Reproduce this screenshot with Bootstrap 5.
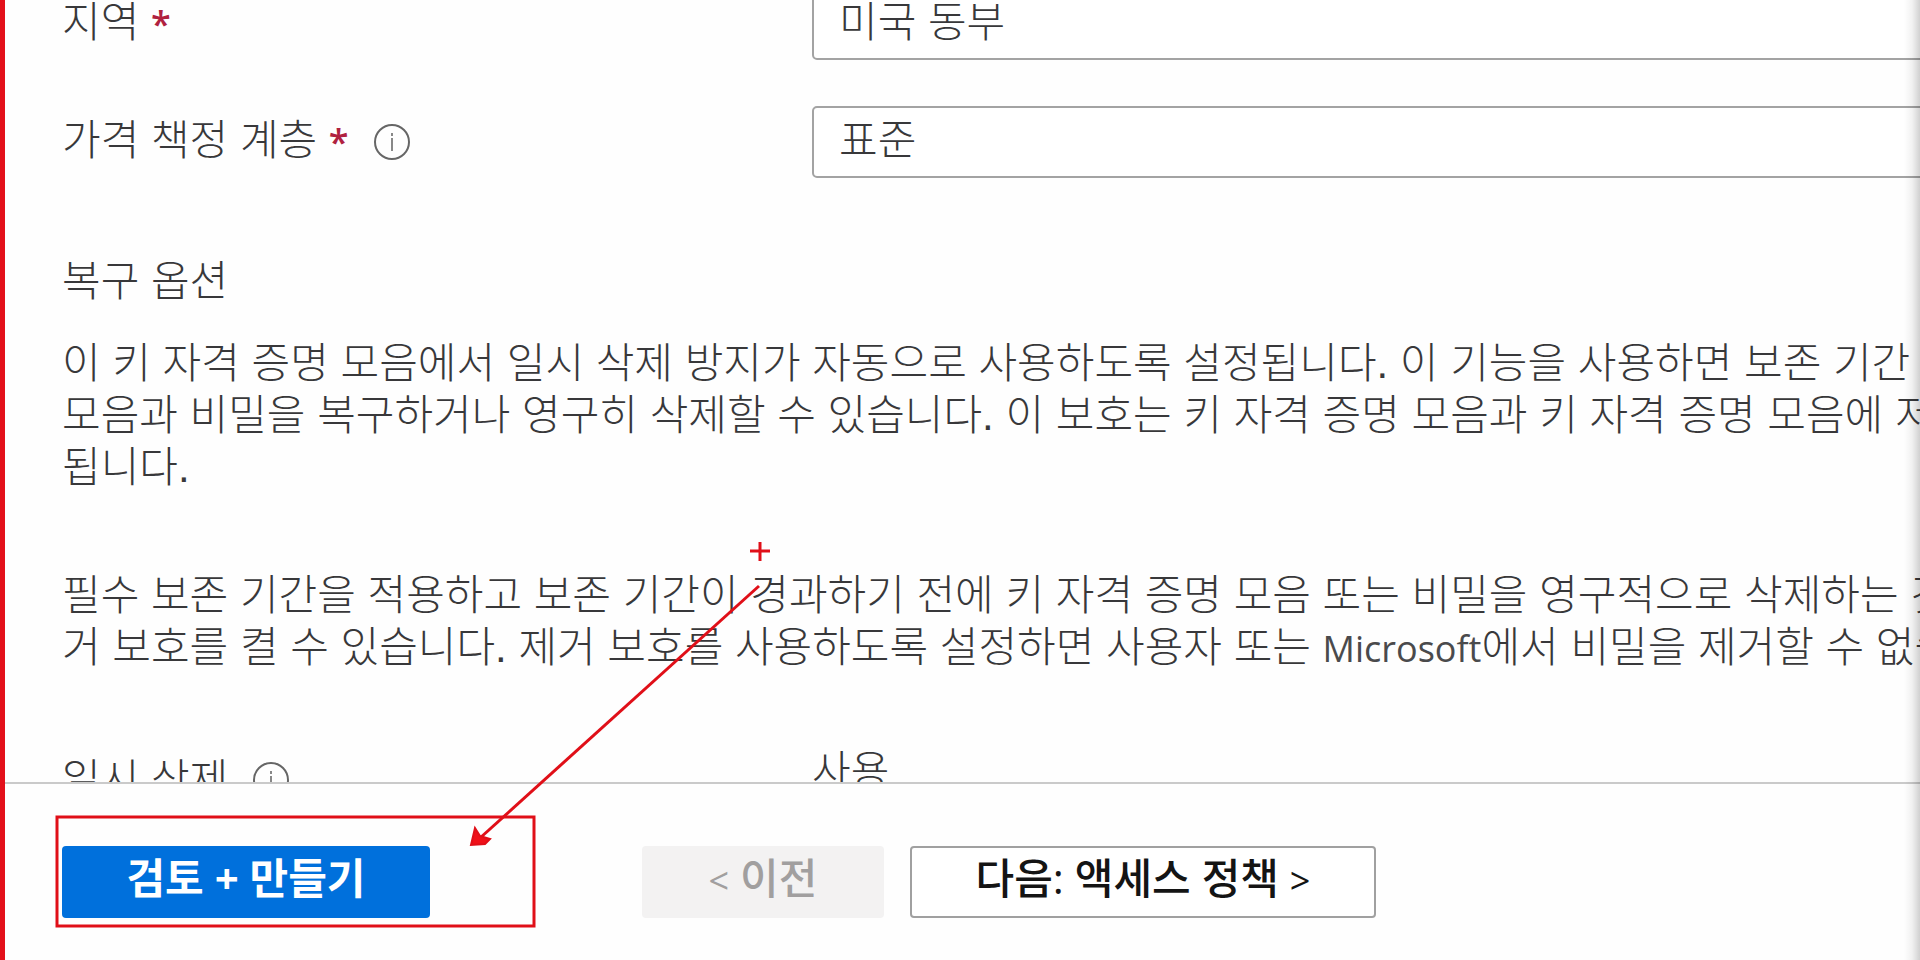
<!DOCTYPE html>
<html lang="ko">
<head>
<meta charset="utf-8">
<meta name="viewport" content="width=device-width, initial-scale=1">
<title>키 자격 증명 모음 만들기</title>
<link href="https://cdn.jsdelivr.net/npm/bootstrap@5.3.0/dist/css/bootstrap.min.css" rel="stylesheet">
<style>
  body {
    font-family: "Liberation Sans", "Noto Sans CJK KR", sans-serif;
    font-size: 42px;
    line-height: 52px;
    font-weight: 300;
    color: #38383a;
    background: #fefefe;
  }
  .blade { border-left: 5px solid #e3101a; }
  .blade::after {
    content: "";
    position: absolute;
    inset: 0 0 0 auto;
    width: 16px;
    background: linear-gradient(to right, rgba(0,0,0,0), rgba(0,0,0,.05) 50%, rgba(0,0,0,.18));
    pointer-events: none;
  }
  .blade-body { padding-left: 57px; min-height: 0; }
  .form-rows { margin-top: -12px; gap: 46px; }
  .label-col { width: 750px; }
  .required-star { font-family: "Open Sans", sans-serif; font-size: 36px; color: #b0213f; font-weight: 600; line-height: 1; }
  .form-rows .form-select {
    height: 72px;
    margin-right: -32px;
    padding: 0 25px 2px;
    border: 2px solid #a3a3a3;
    border-radius: 5px;
    background: #fff;
    font: inherit;
    color: inherit;
  }
  .form-rows label { padding-bottom: 2px; }
  .section-title { font: inherit; margin: 78px 0 30px; }
  .copy { margin-bottom: 76px; }
  .latin { font-family: "Open Sans", sans-serif; font-size: 36px; line-height: 1; font-weight: 400; color: #4a4a4c; }
  .info-icon { width: 38px; height: 38px; }
  .status-row { margin-top: -4px; }
  .blade-footer { border-top: 2px solid #cacaca; padding: 62px 0 42px 57px; }
  .blade-footer .btn {
    --bs-btn-border-radius: 4px;
    height: 72px;
    padding: 0 0 8px;
    font-family: "Open Sans", "Noto Sans CJK KR", sans-serif;
    font-size: 42px;
    line-height: 52px;
    font-weight: 500;
  }
  .blade-footer .btn-create { width: 368px; margin-right: 212px; background: #0070dc; color: #fff; font-weight: 700; }
  .blade-footer .btn-prev { width: 242px; margin-right: 26px; background: #f3f2f2; color: #a19f9f; opacity: 1; border: 0; }
  .blade-footer .btn-next { width: 466px; background: #fff; color: #141414; border: 2px solid #a0a0a0; }
  .chevron { font-size: 36px; font-weight: 400; line-height: 1; }
  .annotations { inset: 0 0 0 -5px; pointer-events: none; }
</style>
</head>
<body class="m-0 overflow-hidden">
<div class="blade position-relative vh-100 d-flex flex-column overflow-hidden">
  <main class="blade-body flex-grow-1 overflow-hidden">
    <form class="form-rows d-flex flex-column">
      <div class="d-flex align-items-center">
        <label class="label-col flex-shrink-0" for="region">지역 <span class="required-star">*</span></label>
        <select class="form-select flex-grow-1" id="region"><option>미국 동부</option></select>
      </div>
      <div class="d-flex align-items-center">
        <div class="label-col flex-shrink-0 d-flex align-items-center">
          <label for="tier">가격 책정 계층 <span class="required-star">*</span></label>
          <svg class="info-icon ms-4" viewBox="0 0 38 38" fill="none" stroke="#666" role="img" aria-label="정보"><circle cx="19" cy="19" r="17" stroke-width="2"/><path d="M19 15v13M19 10v3" stroke="#888" stroke-width="2"/></svg>
        </div>
        <select class="form-select flex-grow-1" id="tier"><option>표준</option></select>
      </div>
    </form>

    <h2 class="section-title">복구 옵션</h2>
    <p class="copy text-nowrap">이 키 자격 증명 모음에서 일시 삭제 방지가 자동으로 사용하도록 설정됩니다. 이 기능을 사용하면 보존 기간<br>모음과 비밀을 복구하거나 영구히 삭제할 수 있습니다. 이 보호는 키 자격 증명 모음과 키 자격 증명 모음에 저<br>됩니다.</p>
    <p class="copy text-nowrap">필수 보존 기간을 적용하고 보존 기간이 경과하기 전에 키 자격 증명 모음 또는 비밀을 영구적으로 삭제하는 것<br>거 보호를 켤 수 있습니다. 제거 보호를 사용하도록 설정하면 사용자 또는 <span class="latin">Microsoft</span>에서 비밀을 제거할 수 없습</p>

    <div class="status-row d-flex align-items-start">
      <div class="label-col flex-shrink-0 d-flex align-items-center pt-2">
        <span>일시 삭제</span>
        <svg class="info-icon ms-4" viewBox="0 0 38 38" fill="none" stroke="#666" role="img" aria-label="정보"><circle cx="19" cy="19" r="17" stroke-width="2"/><path d="M19 15v13M19 10v3" stroke="#888" stroke-width="2"/></svg>
      </div>
      <div>사용</div>
    </div>
  </main>

  <footer class="blade-footer d-flex flex-shrink-0">
    <button type="button" class="btn btn-create">검토 + 만들기</button>
    <button type="button" class="btn btn-prev" disabled><span class="chevron">&lt;</span> 이전</button>
    <button type="button" class="btn btn-next">다음: 액세스 정책 <span class="chevron">&gt;</span></button>
  </footer>

  <svg class="annotations position-absolute w-100 h-100" fill="none" stroke="#e00f18" stroke-width="3" aria-hidden="true">
    <path d="M750 551h20M760 542v19"/>
    <path d="M759 586L480 838"/>
    <path d="M471 845l4-17 5 8 10 3-5 5z" fill="#f01018" stroke-width="2"/>
    <rect x="57" y="817" width="477" height="109"/>
  </svg>
</div>
<script src="https://cdn.jsdelivr.net/npm/bootstrap@5.3.0/dist/js/bootstrap.bundle.min.js"></script>
</body>
</html>
